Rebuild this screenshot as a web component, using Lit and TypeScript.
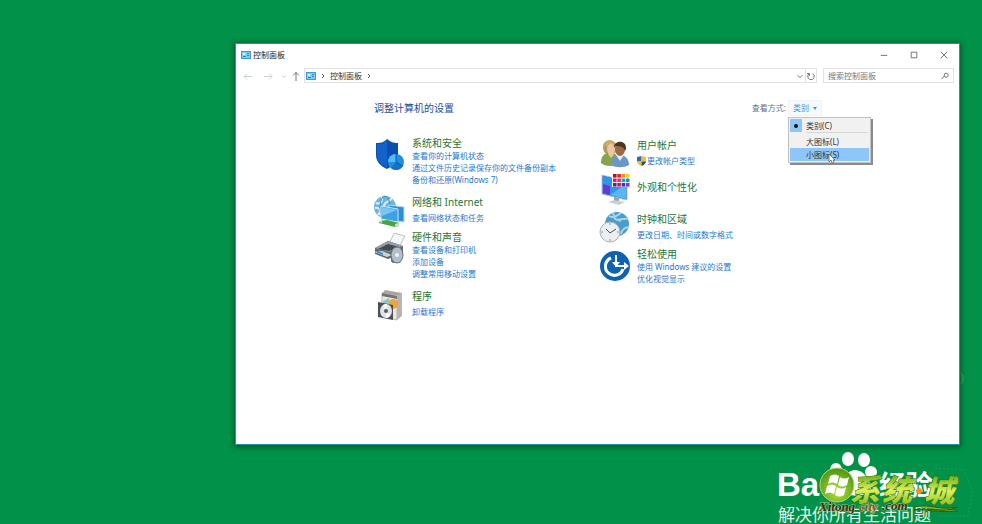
import { LitElement, html, css, svg, nothing } from "lit";
import { customElement, property, state } from "lit/decorators.js";
import { classMap } from "lit/directives/class-map.js";

type Category = { icon: string; title: string; links: string[]; shield?: boolean };

const LEFT: Category[] = [
  { icon: "security", title: "系统和安全", links: ["查看你的计算机状态", "通过文件历史记录保存你的文件备份副本", "备份和还原(Windows 7)"] },
  { icon: "network", title: "网络和 Internet", links: ["查看网络状态和任务"] },
  { icon: "printer", title: "硬件和声音", links: ["查看设备和打印机", "添加设备", "调整常用移动设置"] },
  { icon: "programs", title: "程序", links: ["卸载程序"] },
];

const RIGHT: Category[] = [
  { icon: "users", title: "用户帐户", links: ["更改帐户类型"], shield: true },
  { icon: "appearance", title: "外观和个性化", links: [] },
  { icon: "clock", title: "时钟和区域", links: ["更改日期、时间或数字格式"] },
  { icon: "access", title: "轻松使用", links: ["使用 Windows 建议的设置", "优化视觉显示"] },
];

const swatches = ["#b3121c", "#d8232a", "#f28c1c", "#f4c81e", "#e0157a", "#e53935", "#2196f3", "#00a88f", "#5b1fa8", "#c2186b", "#2a3db8", "#8a2be2"];

const ICONS: Record<string, unknown> = {
  security: svg`
    <path d="M2 4C8 4 10 3 13 0c4 3 6 4 11 4v12c0 7-5 11-11 14C6 27 2 22 2 16z" fill="#0b4fae"/>
    <path d="M3 5c5 0 8-1 10-4v28C7 26 3 21 3 16z" fill="#1262cb"/>
    <circle cx="22" cy="23" r="8" fill="#1f8fe0"/>
    <path d="M22 23V15a8 8 0 0 0-8 8z" fill="#5ab8f0"/>
    <path d="M22 23l7 4a8 8 0 0 1-12 2z" fill="#1273c4"/>
    <path d="M22 15v8l7 4" stroke="#0c5aa8" fill="none"/>`,
  network: svg`
    <circle cx="11" cy="12" r="11" fill="#6fb4dc"/>
    <path d="M2 8c4 2 7-2 6-6M4 20c2-5 6-4 6-9s6-4 8-8M1 13c4-1 6 2 5 7" stroke="#d9eef8" stroke-width="2" fill="none"/>
    <ellipse cx="11" cy="12" rx="5" ry="11" fill="none" stroke="#3d8abb"/>
    <path d="M15 10l15 2v15l-15-2z" fill="#2f8fd2" stroke="#b9ddf4"/>
    <path d="M7 11l17 3v13L7 24z" fill="#3fa0e4" stroke="#c4e6fa"/>
    <path d="M8 12l15 3-15 6z" fill="#76c6f4"/>
    <path d="M5 26l8-1 12 3v3l-4 1-16-4z" fill="#44a63c"/><path d="M5 26l3-1v3l-3-1zM21 29l4-1v3l-4 1z" fill="#cfdccb"/>`,
  printer: svg`
    <path d="M16 9L20 0l11 3-6 11z" fill="#f4f5f6" stroke="#bcc2c6"/>
    <path d="M1 15l13-7 15 5v8l-15 5-13-5z" fill="#63696f"/>
    <path d="M1 15l13-7 15 5-14 6z" fill="#969da3"/>
    <path d="M4 16l10-5 11 3-10 4z" fill="#454a50"/>
    <path d="M0 19l13 5 5-2-10-4z" fill="#cbd3d9"/>
    <path d="M3 18l6 2v2l-6-2z" fill="#2e91d8"/>
    <rect x="17" y="16" width="10" height="14" rx="3" fill="#59626b"/>
    <ellipse cx="23" cy="22" rx="6" ry="8" fill="#b2bfca" stroke="#66737e"/>
    <circle cx="23" cy="22" r="2" fill="#eef3f6"/>`,
  programs: svg`
    <path d="M8 5l3-4 17 3-3 3z" fill="#aaa6a3"/>
    <path d="M8 4l15 3v24L8 27z" fill="#e9e7e4" stroke="#b7b3af"/>
    <path d="M23 7l5-3v23l-5 4z" fill="#b9b4b0"/>
    <path d="M8 4l15 3v3L8 7z" fill="#77736f"/>
    <circle cx="19" cy="15" r="5" fill="#f3a33b"/><path d="M9 12l6-3 1 8-7 2z" fill="#8fc7bf"/>
    <path d="M4 13l15 3v15L4 28z" fill="#4b4f52"/>
    <ellipse cx="12" cy="22" rx="6" ry="7" fill="#dfe5e9"/>
    <path d="M12 22l-3-6a7 7 0 0 1 4-1zM12 22l4 5a6 6 0 0 1-4 2z" fill="#fff"/>
    <circle cx="12" cy="22" r="2" fill="#555c61"/>`,
  users: svg`
    <path d="M2 25c0-7 3-10 9-10s9 3 9 10c-4 4-14 4-18 0z" fill="#87a44a"/>
    <path d="M4 9c0-9 13-9 14 0 0 3-1 5-3 7H7C5 14 4 12 4 9z" fill="#b39a5b"/>
    <ellipse cx="12" cy="11" rx="4" ry="6" fill="#ecc5a2"/>
    <path d="M5 9c3-1 6-2 7-5 1 3 3 4 5 5-1-9-11-8-12 0z" fill="#c8ae68"/>
    <path d="M9 16l3 4 3-4z" fill="#ecc5a2"/>
    <path d="M12 27c0-7 4-10 9-10s9 4 9 10c-5 3-13 3-18 0z" fill="#6c96c8"/>
    <path d="M17 17l4 6 4-6z" fill="#e7eef6"/>
    <ellipse cx="21" cy="11" rx="5" ry="7" fill="#9b6b48"/>
    <path d="M15 10c-1-8 13-9 12 1l-1 2c-1-4-4-5-10-5z" fill="#4a3527"/>`,
  appearance: svg`
    <path d="M3 2l25 6v19L3 21z" fill="#2a73be" stroke="#a9c8e5"/>
    <path d="M4 3l23 6v17L4 20z" fill="#2f94ec"/>
    <path d="M4 11l7 2v9l-7-2z" fill="#6a35dc"/>
    <path d="M11 22l16-11v15z" fill="#5ab6f3"/>
    <path d="M15 24l5 1v4h-5z" fill="#9aa4ac"/><path d="M9 29l6-2 11 2-6 3z" fill="#c9d0d5"/>
    <rect x="13" y="0" width="18" height="14" fill="#fff"/>
    ${swatches.map((c, i) => svg`<rect x=${14 + (i % 4) * 4.3} y=${1 + Math.floor(i / 4) * 4.5} width="3.6" height="3.6" fill=${c} />`)}`,
  clock: svg`
    <circle cx="18" cy="12" r="12" fill="#4a9ccb"/>
    <path d="M10 4c4 3 9-1 12-3M19 8c4-2 8 0 10-2M22 22c1-5 4-6 7-7M14 1l2 6 6 2" stroke="#a8d4ea" stroke-width="2" fill="none"/>
    <circle cx="11" cy="20" r="10" fill="#eceff1" stroke="#a9b1b6"/>
    <path d="M11 11v2M11 27v2M2 20h2M18 20h2" stroke="#8d969c" fill="none"/>
    <path d="M7 17l4 4 6-4" stroke="#4b5358" fill="none"/>`,
  access: svg`
    <circle cx="16" cy="16" r="15" fill="#0d62b5"/>
    <path d="M12 8a9 9 0 1 0 12 11" stroke="#fff" stroke-width="3" fill="none"/>
    <path d="M17 5v11h10" stroke="#fff" stroke-width="2" fill="none"/>
    <path d="M13 12l4 5 4-5zM25 12l5 4-5 4z" fill="#fff"/>`,
};

@customElement("cp-category")
class CpCategory extends LitElement {
  @property({ attribute: false }) item!: Category;
  static styles = css`
    :host { display: block; }
    .item { display: flex; gap: 6px; min-height: 32px; }
    .item.many { padding-bottom: 6px; }
    .item.none { min-height: 36px; }
    .none .name { padding-top: 7px; }
    .icon { width: 32px; height: 32px; flex: none; }
    .item.many .icon { margin-top: 3px; }
    .name { margin: 0; font-size: 10px; line-height: 14px; font-weight: 400; white-space: nowrap; }
    .name a { color: #267536; text-decoration: none; }
    .links { margin: 0; padding: 0; list-style: none; }
    .one .links { padding-top: 3px; }
    .links li { display: flex; align-items: center; gap: 1px; font-size: 8px; line-height: 12px; white-space: nowrap; }
    .links a { color: #2678cf; text-decoration: none; }
    a:hover { text-decoration: underline; }
    .uac { width: 9px; height: 10px; }
  `;
  render() {
    const { icon, title, links, shield } = this.item;
    return html`<section class=${classMap({ item: true, none: !links.length, one: links.length === 1, many: links.length > 1 })}>
      <svg class="icon" viewBox="0 0 32 32" aria-hidden="true">${ICONS[icon]}</svg>
      <div>
        <h2 class="name"><a href="#">${title}</a></h2>
        ${links.length
          ? html`<ul class="links">${links.map((l) => html`<li>
              ${shield ? html`<svg class="uac" viewBox="0 0 10 11" aria-hidden="true">
                <path d="M0 1l5-1v6H0z" fill="#2b6cb8"/><path d="M5 0l5 1v5H5z" fill="#f0bf35"/>
                <path d="M0 6h5v5C2 10 0 8 0 6z" fill="#f0bf35"/><path d="M5 6h5c0 2-2 4-5 5z" fill="#1e4f8f"/></svg>` : nothing}
              <a href="#">${l}</a></li>`)}</ul>`
          : nothing}
      </div>
    </section>`;
  }
}

@customElement("desk-watermark")
class DeskWatermark extends LitElement {
  static styles = css`
    :host { display: block; width: 212px; height: 84px; }
    .art { display: block; width: 212px; height: 84px; }
    .latin { font: bold 33px "Liberation Sans", sans-serif; }
    .cjk { font: 27px "Noto Sans CJK SC", sans-serif; font-weight: 700; }
    .motto { font: 17px "Noto Sans CJK SC", sans-serif; }
    .brand { font: italic 900 30px "Noto Sans CJK SC", sans-serif; }
    .site { font: italic bold 13px "Liberation Serif", serif; }
  `;
  render() {
    return html`<svg class="art" viewBox="0 0 212 84">
      <defs>
        <linearGradient id="leaf" x1="0" y1="0" x2="0" y2="1"><stop offset="0.2" stop-color="#6fae18"/><stop offset="0.55" stop-color="#dcf05a"/><stop offset="0.9" stop-color="#84bc1c"/></linearGradient>
        <radialGradient id="ball" cx="0.5" cy="0.7" r="0.7"><stop offset="0" stop-color="#b4e03a"/><stop offset="1" stop-color="#4b930f"/></radialGradient>
      </defs>
      <path d="M165 28l29 2 9 22-5 24h-30" fill="none" stroke="#1f9c58" stroke-dasharray="2 2"/>
      <g fill="#fff">
        <text class="latin" x="7" y="56">Ba</text>
        <ellipse cx="78" cy="19" rx="6" ry="7"/><ellipse cx="94" cy="20" rx="6" ry="7"/>
        <ellipse cx="66" cy="30" rx="6" ry="7"/><ellipse cx="101" cy="32" rx="6" ry="6"/>
        <path d="M71 48c0-8 6-18 14-18s15 9 16 18c0 10-30 10-30 0z"/>
        <text class="cjk" x="109" y="55">经验</text>
        <text class="motto" x="8" y="81" fill="#e3f3e9">解决你所有生活问题</text>
      </g>
      <circle cx="67" cy="45" r="17" fill="url(#ball)" stroke="#b9d985"/>
      <path d="M60 36c3-2 6-2 9 0l-2 8c-3-2-6-2-9 0zM70 37c3 2 6 2 9 0l-2 8c-3 2-6 2-9 0zM57 46c3-2 6-2 9 0l-2 8c-3-2-6-2-9 0zM67 47c3 2 6 2 9 0l-2 8c-3 2-6 2-9 0z" fill="#fff"/>
      <g class="brand" fill="url(#leaf)" stroke="#39700c" stroke-width="1" paint-order="stroke">
        <text x="80" y="61">系</text><text x="112" y="61">统</text><text x="154" y="62">城</text>
      </g>
      <circle cx="149" cy="51" r="3" fill="#f5941e"/>
      <path d="M144 67c16-4 25 4 44 0-16 7-30 0-44 3 12-1 24 3 44 1" fill="#7eb525" stroke="#34590f"/>
      <g class="site" fill="#332d12" stroke="#b6c98a" stroke-width="1" paint-order="stroke">
        <text x="49" y="71">Xitong</text><text x="89" y="71" fill="#8c5a1c">city</text><text x="112" y="70">.com</text>
      </g>
    </svg>`;
  }
}

@customElement("app-root")
class AppRoot extends LitElement {
  @state() private open = true;
  static styles = css`
    :host { display: block; }
    * { box-sizing: border-box; }
    .desktop {
      position: relative; display: flex; min-height: 100vh; overflow: hidden;
      padding: 43px 22px 79px 235px; background: #019148; color: #333;
      font: 8px/12px "Noto Sans", "Noto Sans CJK SC", sans-serif;
    }
    button, input { font: inherit; color: inherit; margin: 0; padding: 0; border: 0; background: none; }
    .window { flex: 1; min-width: 0; background: #fff; border: 1px solid #1a9c9b; box-shadow: 0 1px 5px 1px #03542c; position: relative; z-index: 1; }
    .titlebar { display: flex; align-items: center; height: 21px; padding: 0 0 0 5px; gap: 2px; }
    .title { flex: 1; margin: 0; font-size: 8px; font-weight: 400; color: #222; }
    .panel-icon { width: 10px; height: 8px; flex: none; }
    .controls { display: flex; }
    .control { width: 30px; height: 20px; display: grid; place-items: center; }
    .glyph { width: 8px; height: 8px; fill: none; stroke: #555; }
    .bar { display: flex; align-items: center; height: 15px; margin-top: 3px; padding: 0 5px 0 6px; }
    .nav { width: 12px; height: 12px; display: grid; place-items: center; margin-right: 8px; }
    .nav.narrow { width: 8px; margin-right: 3px; margin-left: -3px; }
    .nav.up { margin-right: 2px; }
    .nav .glyph { width: 10px; height: 10px; stroke: #777; }
    .nav:disabled .glyph { stroke: #d2d2d2; }
    .address { flex: 1; display: flex; align-items: center; gap: 5px; height: 15px; padding-left: 1px; border: 1px solid #e2e2e2; }
    .crumb { color: #333; text-decoration: none; }
    .chev { width: 4px; height: 6px; fill: none; stroke: #555; }
    .spacer { flex: 1; }
    .refresh { display: grid; place-items: center; width: 11px; height: 13px; margin-left: -5px; }
    .refresh.end { border-left: 1px solid #e2e2e2; }
    .search { display: flex; align-items: center; width: 131px; height: 15px; margin-left: 6px; padding: 0 4px; border: 1px solid #e2e2e2; }
    .field { flex: 1; min-width: 0; height: 13px; outline: 0; }
    .field::placeholder { color: #777; opacity: 1; }
    .content { padding: 17px 137px 16px 138px; }
    .head { display: flex; align-items: center; justify-content: space-between; height: 16px; }
    .heading { margin: 0; font-size: 10px; line-height: 16px; font-weight: 400; color: #254b9b; }
    .view { display: flex; align-items: center; gap: 2px; position: relative; color: #64708a; }
    .picker { display: flex; align-items: center; justify-content: center; gap: 4px; width: 34px; height: 16px; color: #3c93e8; background: #f7fafd; border: 1px solid #eff3f8; }
    .caret { width: 4px; height: 3px; fill: #3c93e8; }
    .menu { position: absolute; right: -49px; top: 17px; width: 83px; padding: 1px; background: #f1f1f1; border: 1px solid #c2c2c2; box-shadow: 2px 2px 0 #8c8c8c; z-index: 2; }
    .option { display: flex; align-items: center; width: 100%; height: 13px; color: #333; text-align: left; }
    .option.first { margin-top: 2px; }
    .option.hot { background: #8dc7fa; }
    .mark { width: 12px; height: 13px; margin-right: 4px; display: grid; place-items: center; }
    .checked .mark { background: #8dc7fa; }
    .dot { width: 4px; height: 4px; border-radius: 50%; background: #111; }
    .rule { height: 1px; margin: 0 1px 0 16px; border: 0; background: #d7d7d7; }
    .cursor { position: absolute; left: 39px; bottom: -2px; width: 8px; height: 11px; }
    .columns { display: grid; grid-template-columns: 1fr 1fr; column-gap: 2px; margin-top: 20px; }
    .column { display: flex; flex-direction: column; gap: 3px; }
    .column.second { padding-top: 2px; }
    .halo { position: absolute; right: 18px; top: 371px; width: 14px; height: 15px; border: 2px solid #2da352; border-radius: 50%; }
    .watermark { position: absolute; right: 0; bottom: 0; }
  `;

  private panelIcon() {
    return html`<svg class="panel-icon" viewBox="0 0 10 8" aria-hidden="true"><rect width="10" height="8" fill="#3d9bd6"/><rect x="1" y="1" width="8" height="6" fill="#82cdf5"/><circle cx="3" cy="3" r="1" fill="#fff"/><path d="M6 2h2v1H6zM6 4h2v1H6zM2 5h3v1H2z" fill="#2f82c2"/></svg>`;
  }
  private chevron() {
    return html`<svg class="chev" viewBox="0 0 4 6" aria-hidden="true"><path d="M1 1l2 2-2 2"/></svg>`;
  }
  private glyph(d: string) {
    return html`<svg class="glyph" viewBox="0 0 10 10" aria-hidden="true"><path d=${d} /></svg>`;
  }

  render() {
    return html`<div class="desktop">
      <div class="halo"></div>
      <main class="window">
        <header class="titlebar">
          ${this.panelIcon()}
          <h1 class="title">控制面板</h1>
          <div class="controls">
            <button class="control" aria-label="最小化">${this.glyph("M1 5.5h8")}</button>
            <button class="control" aria-label="最大化">${this.glyph("M1.5 1.5h7v7h-7z")}</button>
            <button class="control" aria-label="关闭">${this.glyph("M1 1l8 8M9 1l-8 8")}</button>
          </div>
        </header>
        <nav class="bar">
          <button class="nav" disabled aria-label="后退">${this.glyph("M9 5.5H1M4 2.5l-3 3 3 3")}</button>
          <button class="nav" disabled aria-label="前进">${this.glyph("M1 5.5h8M6 2.5l3 3-3 3")}</button>
          <button class="nav narrow" disabled aria-label="历史">${this.glyph("M3 4.5l2 2 2-2")}</button>
          <button class="nav up" aria-label="上移">${this.glyph("M5 10V1M2 4.5l3-3 3 3")}</button>
          <div class="address">
            ${this.panelIcon()}${this.chevron()}<a class="crumb" href="#">控制面板</a>${this.chevron()}
            <span class="spacer"></span>
            <button class="refresh" aria-label="展开">${this.glyph("M2 4l3 3 3-3")}</button>
            <button class="refresh end" aria-label="刷新">${this.glyph("M3 2a4 4 0 1 0 4 0M3 5V2H0")}</button>
          </div>
          <label class="search">
            <input class="field" type="text" aria-label="搜索控制面板" placeholder="搜索控制面板" />
            ${this.glyph("M1 9l3-4M4 4a2.5 2.5 0 1 0 5 0a2.5 2.5 0 1 0-5 0")}
          </label>
        </nav>
        <div class="content">
          <div class="head">
            <h2 class="heading">调整计算机的设置</h2>
            <div class="view">
              <span id="view-label">查看方式:</span>
              <button class="picker" aria-haspopup="menu" aria-expanded=${this.open} aria-describedby="view-label" @click=${() => (this.open = !this.open)}>
                类别<svg class="caret" viewBox="0 0 4 3" aria-hidden="true"><path d="M0 0h4L2 3z"/></svg>
              </button>
              ${this.open
                ? html`<div class="menu" role="menu">
                    <button class="option checked" role="menuitemradio" aria-checked="true"><span class="mark"><span class="dot"></span></span>类别(C)</button>
                    <hr class="rule" />
                    <button class="option first" role="menuitemradio" aria-checked="false"><span class="mark"></span>大图标(L)</button>
                    <button class="option hot" role="menuitemradio" aria-checked="false"><span class="mark"></span>小图标(S)</button>
                    <svg class="cursor" viewBox="0 0 8 11" aria-hidden="true"><path d="M1 1v8l2-2 1 3 2-1-1-2h2z" fill="#fff" stroke="#555" stroke-width="0.7"/></svg>
                  </div>`
                : nothing}
            </div>
          </div>
          <div class="columns">
            <div class="column">${LEFT.map((c) => html`<cp-category .item=${c}></cp-category>`)}</div>
            <div class="column second">${RIGHT.map((c) => html`<cp-category .item=${c}></cp-category>`)}</div>
          </div>
        </div>
      </main>
      <desk-watermark class="watermark"></desk-watermark>
    </div>`;
  }
}
